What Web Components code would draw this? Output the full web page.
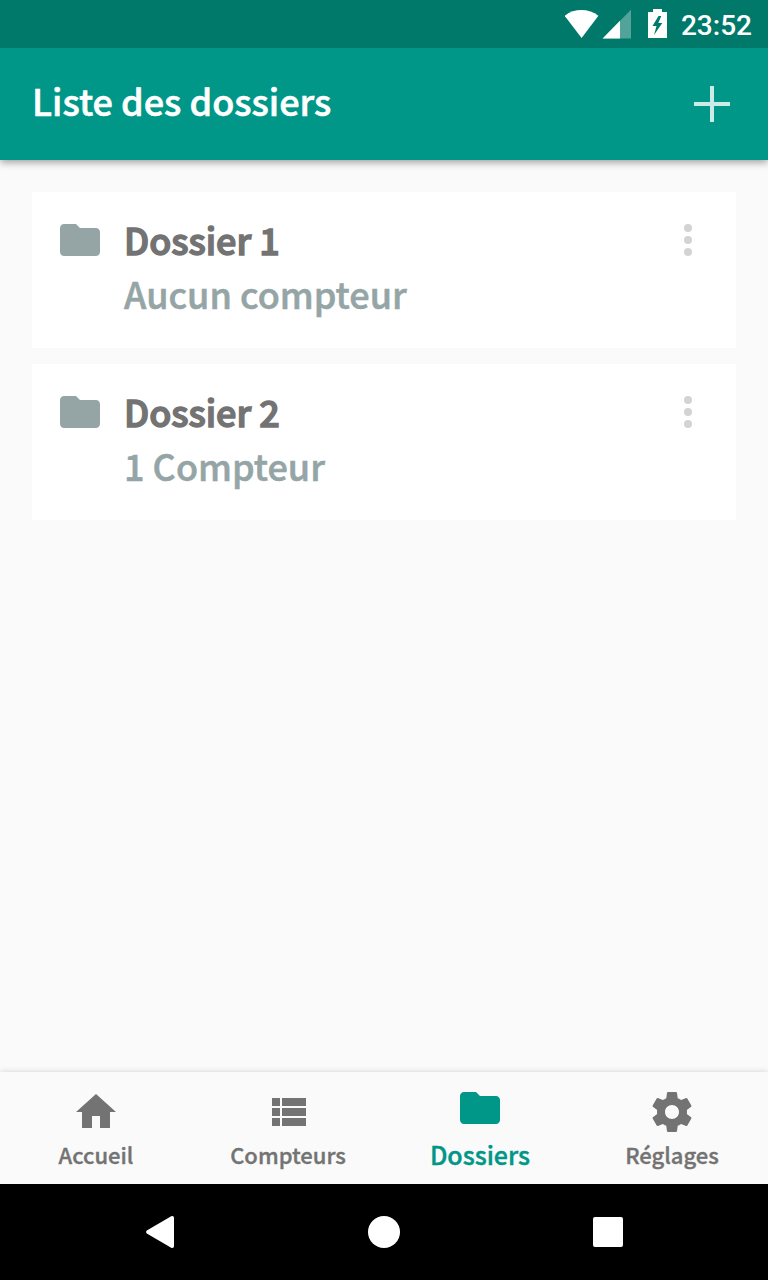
<!DOCTYPE html>
<html lang="fr">
<head>
<meta charset="utf-8">
<meta name="viewport" content="width=device-width, initial-scale=1">
<title>Liste des dossiers</title>
<style>
  body { margin: 0; font-family: "Noto Sans CJK SC", "Noto Sans", sans-serif; font-weight: 500; font-variant-numeric: proportional-nums; background: #fafafa; }
</style>
</head>
<body>
<folders-app></folders-app>

<script>
const icons = {
  folder: '<path d="M10 4H4c-1.1 0-2 .9-2 2v12c0 1.1.9 2 2 2h16c1.1 0 2-.9 2-2V8c0-1.1-.9-2-2-2h-8l-2-2z"/>',
  home: '<path d="M10 20v-6h4v6h5v-8h3L12 3 2 12h3v8z"/>',
  list: '<path d="M4 14h4v-4H4v4zm0 5h4v-4H4v4zM4 9h4V5H4v4zm5 5h12v-4H9v4zm0 5h12v-4H9v4zM9 5v4h12V5H9z"/>',
  settings: '<path d="M19.43 12.98c.04-.32.07-.64.07-.98s-.03-.66-.07-.98l2.11-1.65c.19-.15.24-.42.12-.64l-2-3.46c-.12-.22-.39-.3-.61-.22l-2.49 1c-.52-.4-1.08-.73-1.69-.98l-.38-2.65C14.46 2.18 14.25 2 14 2h-4c-.25 0-.46.18-.49.42l-.38 2.65c-.61.25-1.17.59-1.69.98l-2.49-1c-.23-.09-.49 0-.61.22l-2 3.46c-.13.22-.07.49.12.64l2.11 1.65c-.04.32-.07.65-.07.98s.03.66.07.98l-2.11 1.65c-.19.15-.24.42-.12.64l2 3.46c.12.22.39.3.61.22l2.49-1c.52.4 1.08.73 1.69.98l.38 2.65c.03.24.24.42.49.42h4c.25 0 .46-.18.49-.42l.38-2.65c.61-.25 1.17-.59 1.69-.98l2.49 1c.23.09.49 0 .61-.22l2-3.46c.12-.22.07-.49-.12-.64l-2.11-1.65zM12 15.5c-1.93 0-3.5-1.57-3.5-3.5s1.57-3.5 3.5-3.5 3.5 1.57 3.5 3.5-1.57 3.5-3.5 3.5z"/>',
  plus: '<path d="M3 11h8V3h2v8h8v2h-8v8h-2v-8H3z"/>',
  more: '<circle cx="12" cy="6" r="2"/><circle cx="12" cy="12" r="2"/><circle cx="12" cy="18" r="2"/>',
  back: '<path d="M17.6 4.1L5.4 11.2q-.9.8 0 1.6l12.2 7.1q1.4.4 1.4-.9V5q0-1.3-1.4-.9z"/>',
  circle: '<circle cx="12" cy="12" r="8"/>',
  square: '<rect x="4.5" y="4.5" width="15" height="15" rx="1"/>'
};

function define(name, css, html) {
  customElements.define(name, class extends HTMLElement {
    constructor() {
      super();
      const attr = key => this.getAttribute(key) || '';
      this.attachShadow({ mode: 'open' }).innerHTML =
        '<style>*{box-sizing:border-box}button{font:inherit;color:inherit;background:none;border:0;padding:0;cursor:pointer}' +
        css + '</style>' + html(attr);
    }
  });
}

define('app-icon', `
  :host { display: block; width: 48px; height: 48px; flex: none; }
  svg { display: block; width: 100%; height: 100%; fill: currentColor; }`,
  attr => `<svg viewBox="0 0 24 24" aria-hidden="true">${icons[attr('name')]}</svg>`);

define('status-bar', `
  :host { display: flex; justify-content: flex-end; align-items: center; height: 48px; padding: 0 16px; background: #00796b; color: #fff; z-index: 2; }
  svg { display: block; fill: currentColor; margin-right: 12px; }
  time { font: 500 28px/32px Roboto, sans-serif; padding-top: 4px; }`,
  () => `<svg width="104" height="48" viewBox="0 0 104 48" role="img" aria-label="Wi-Fi, réseau, batterie en charge">
      <path d="M-.4 15.800C9 8.200 24 8.200 33.400 15.800L16.600 38z"/>
      <path d="M66 9.800V38.400H37.600z" opacity=".32"/>
      <path d="M55 20.800V38.400H37.600z"/>
      <path fill-rule="evenodd" d="M83 12h5V9h9v3h5v26H83zM93.500 16l-6 10h4l-2.500 9L97.300 23h-4L96.300 16z"/>
    </svg><time>23:52</time>`);

define('title-bar', `
  :host { display: flex; justify-content: space-between; align-items: center; height: 112px; padding: 0 32px; background: #009688; color: #fff; box-shadow: 0 2px 8px rgba(0,0,0,.4); z-index: 1; }
  h1 { margin: 0; padding-bottom: 8px; font-size: 36px; line-height: 48px; font-weight: 500; -webkit-text-stroke: .016em; }
  button { opacity: .8; }`,
  () => `<h1><slot></slot></h1><button aria-label="Ajouter un dossier"><app-icon name="plus"></app-icon></button>`);

define('folder-card', `
  :host { display: flex; align-items: flex-start; min-height: 156px; padding: 24px; background: #fff; color: #95a5a6; }
  .text { flex: 1; display: flex; flex-direction: column; gap: 8px; margin-left: 20px; font-size: 36px; line-height: 46px; }
  h2 { margin: 0; font-size: inherit; font-weight: 500; color: #737373; -webkit-text-stroke: .04em; }
  p { margin: 0; -webkit-text-stroke: .016em; }
  button { color: #d3d3d3; }`,
  () => `<app-icon name="folder"></app-icon>
    <div class="text"><h2><slot name="title"></slot></h2><p><slot></slot></p></div>
    <button aria-label="Options du dossier"><app-icon name="more"></app-icon></button>`);

define('tab-item', `
  :host { display: block; flex: 1; color: #737373; }
  a { display: flex; flex-direction: column; align-items: center; height: 112px; padding-top: 16px; color: inherit; text-decoration: none; font-size: 22px; line-height: 32px; }
  span { margin-top: 2px; -webkit-text-stroke: .016em; }
  :host([active]) { color: #009688; }
  :host([active]) a { padding-top: 12px; font-size: 25px; }
  :host([active]) span { margin-top: 6px; }`,
  attr => `<a href="#${attr('icon')}"><app-icon name="${attr('icon')}"></app-icon><span><slot></slot></span></a>`);

define('tab-bar', `
  :host { display: block; background: #fafafa; box-shadow: 0 0 6px rgba(0,0,0,.16); }
  nav { display: flex; }`,
  () => `<nav aria-label="Sections"><slot></slot></nav>`);

define('system-bar', `
  :host { display: flex; justify-content: center; align-items: center; gap: 176px; height: 96px; background: #000; color: #fff; z-index: 1; }`,
  () => `<button aria-label="Retour"><app-icon name="back"></app-icon></button>
    <button aria-label="Accueil"><app-icon name="circle"></app-icon></button>
    <button aria-label="Applications récentes"><app-icon name="square"></app-icon></button>`);

define('folders-app', `
  :host { display: flex; flex-direction: column; min-height: 100vh; }
  main { flex: 1; display: flex; flex-direction: column; gap: 16px; padding: 32px; }`,
  () => `<status-bar></status-bar>
    <title-bar>Liste des dossiers</title-bar>
    <main>
      <folder-card><span slot="title">Dossier 1</span>Aucun compteur</folder-card>
      <folder-card><span slot="title">Dossier 2</span>1 Compteur</folder-card>
    </main>
    <tab-bar>
      <tab-item icon="home">Accueil</tab-item>
      <tab-item icon="list">Compteurs</tab-item>
      <tab-item icon="folder" active>Dossiers</tab-item>
      <tab-item icon="settings">Réglages</tab-item>
    </tab-bar>
    <system-bar></system-bar>`);
</script>
</body>
</html>
